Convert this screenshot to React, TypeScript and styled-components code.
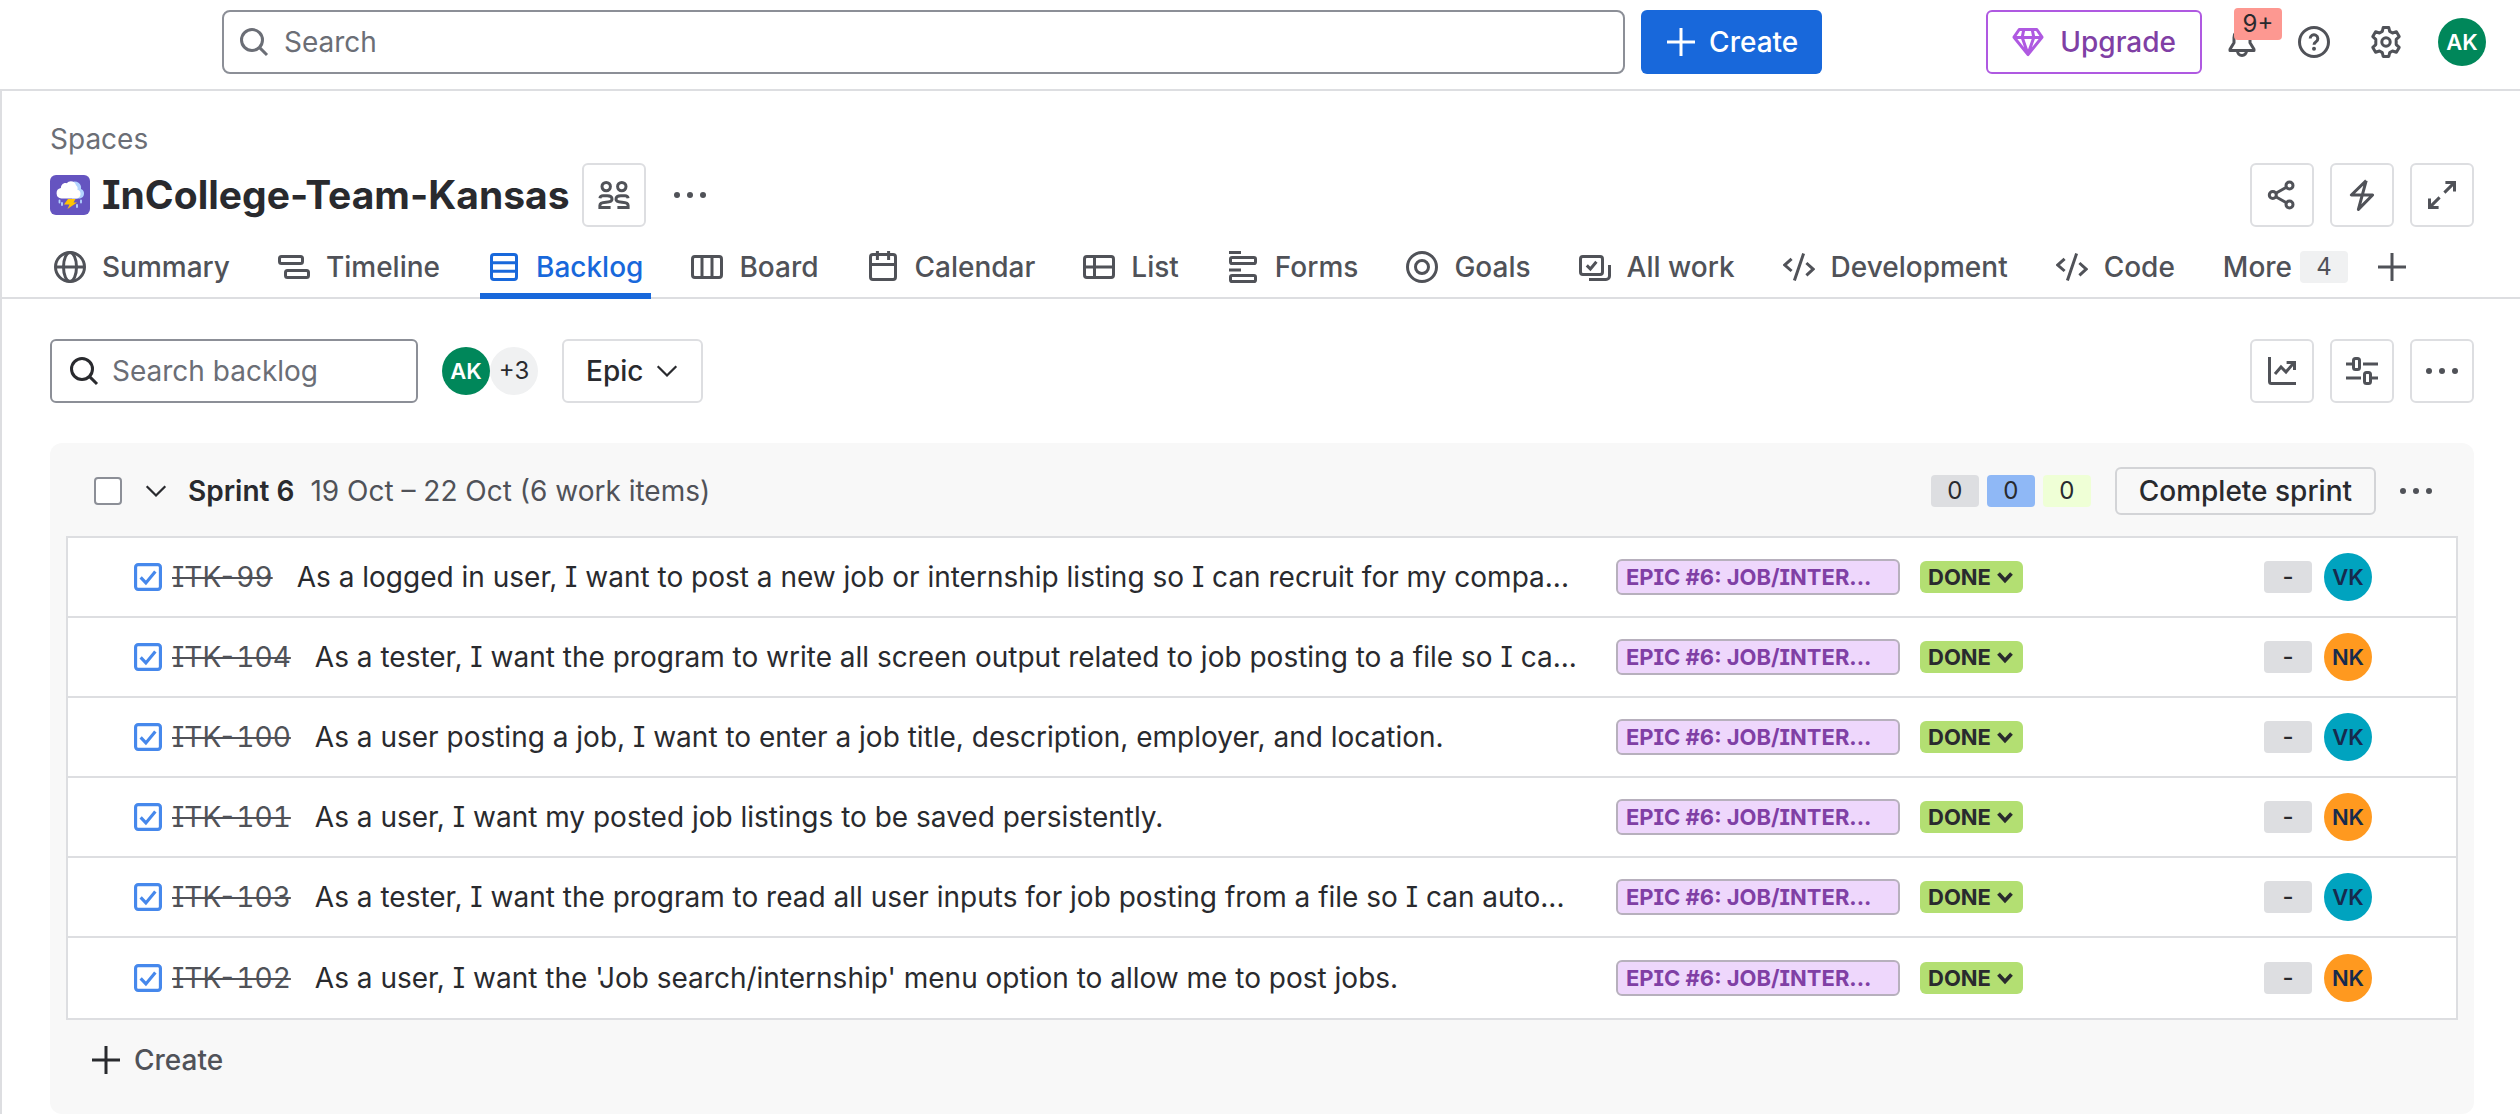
import React from 'react';
import styled, { createGlobalStyle, css } from 'styled-components';

const color = {
  text: '#292a2e',
  subtle: '#505258',
  subtlest: '#6b6e76',
  border: '#dddee1',
  inputBorder: '#8c8f97',
  blue: '#1868db',
  neutral: '#dddee1',
};

const GlobalStyle = createGlobalStyle`
  *, *::before, *::after { box-sizing: border-box; }
  body {
    margin: 0;
    background: #fff;
    color: ${color.text};
    font-family: Inter, "Liberation Sans", sans-serif;
    font-size: 28px;
    line-height: 40px;
    font-feature-settings: 'cv08';
  }
  button, input { font: inherit; font-feature-settings: inherit; color: inherit; margin: 0; }
  button { cursor: pointer; background: none; border: 0; padding: 0; }
  h1, h2, p, ul { margin: 0; padding: 0; }
  a { color: inherit; text-decoration: none; }
`;

/* ---------- icons ---------- */

const Svg = styled.svg<{ $size?: number }>`
  display: block;
  flex: none;
  width: ${(p) => p.$size ?? 32}px;
  height: ${(p) => p.$size ?? 32}px;
  fill: none;
  stroke: currentColor;
  stroke-width: 1.5;
`;

type IconProps = { children: React.ReactNode; size?: number };
const Icon = ({ children, size }: IconProps) => (
  <Svg viewBox="0 0 16 16" $size={size} aria-hidden="true">
    {children}
  </Svg>
);

const SearchIcon = () => (
  <Icon>
    <circle cx="7" cy="7" r="5.25" />
    <path d="M10.8 10.8 14.5 14.5" />
  </Icon>
);
const PlusIcon = () => (
  <Icon>
    <path d="M8 1v14M1 8h14" />
  </Icon>
);
const GemIcon = () => (
  <Icon>
    <path d="M3.6 1.75h8.8L15 5.6 8 14.3 1 5.6zM1 5.7h14M5.9 1.75 5.1 5.7 8 14l2.9-8.3-.8-3.95" strokeLinejoin="round" />
  </Icon>
);
const BellIcon = () => (
  <Icon>
    <path d="M8 1.75a4 4 0 0 0-4 4v2.6L2 11.6v.65h12v-.65l-2-3.25v-2.6a4 4 0 0 0-4-4Z" strokeLinejoin="round" />
    <path d="M5.75 12.5a2.25 2.25 0 0 0 4.5 0" />
  </Icon>
);
const HelpIcon = () => (
  <Icon>
    <circle cx="8" cy="8" r="7.25" />
    <path d="M6.1 6.3a1.9 1.9 0 1 1 2.9 1.6c-.6.4-1 .7-1 1.5" />
    <circle cx="8" cy="11.4" r="1" fill="currentColor" stroke="none" />
  </Icon>
);
const GearIcon = () => (
  <Icon>
    <path
      d="M6.6 .75h2.8l.45 1.95 1.4.8 1.95-.6 1.4 2.4-1.5 1.4v2.6l1.5 1.4-1.4 2.4-1.95-.6-1.4.8-.45 1.95H6.6l-.45-1.95-1.4-.8-1.95.6-1.4-2.4 1.5-1.4V6.7L1.4 5.3l1.4-2.4 1.95.6 1.4-.8z"
      strokeLinejoin="round"
    />
    <circle cx="8" cy="8" r="2.1" />
  </Icon>
);
const PersonHalf = () => (
  <>
    <circle cx="4.1" cy="3.8" r="2.1" />
    <path d="M.95 9.6C1.1 8.8 1.700 8.400 2.500 8.400H4.600C6.100 8.400 7 9.100 7 10.100C7 11.400 5.600 11.500 4 11.600C2 11.700 .95 12.100 .95 13.200V14.250H6.300" />
  </>
);
const PeopleIcon = () => (
  <Icon>
    <PersonHalf />
    <g transform="matrix(-1 0 0 1 16 0)">
      <PersonHalf />
    </g>
  </Icon>
);
const DotsIcon = () => (
  <Icon>
    <g fill="currentColor" stroke="none">
      <circle cx="1.5" cy="8" r="1.5" />
      <circle cx="8" cy="8" r="1.5" />
      <circle cx="14.5" cy="8" r="1.5" />
    </g>
  </Icon>
);
const ShareIcon = () => (
  <Icon>
    <circle cx="3.4" cy="8" r="1.75" />
    <circle cx="11.75" cy="3.25" r="1.75" />
    <circle cx="11.75" cy="12.75" r="1.75" />
    <path d="M4.9 7.1l5.3-3M4.9 8.9l5.3 3" />
  </Icon>
);
const BoltIcon = () => (
  <Icon>
    <path d="M10.1 .8 2.7 8h10.6L6.2 15.2 10.1 .8" strokeLinejoin="round" />
  </Icon>
);
const ExpandIcon = () => (
  <Icon>
    <path d="M9.2 6.8l5-5M9.7 1.75h4.55V6.3M6.8 9.2l-5 5M6.3 14.25H1.75V9.7" />
  </Icon>
);
const GlobeIcon = () => (
  <Icon>
    <circle cx="8" cy="8" r="7.25" />
    <ellipse cx="8" cy="8" rx="3.25" ry="7.25" />
    <path d="M.75 8h14.5" />
  </Icon>
);
const TimelineIcon = () => (
  <Icon>
    <rect x=".75" y="2.75" width="11.5" height="3.5" rx="1" />
    <rect x="3.75" y="9.75" width="11.5" height="3.5" rx="1" />
  </Icon>
);
const BacklogIcon = () => (
  <Icon>
    <rect x="1.75" y="1.75" width="12.5" height="12.5" rx="1.2" />
    <path d="M2 5.9h12M2 10.1h12" />
  </Icon>
);
const BoardIcon = () => (
  <Icon>
    <rect x=".75" y="2.75" width="14.5" height="10.5" rx="1.2" />
    <path d="M5.5 3v10M10.5 3v10" />
  </Icon>
);
const CalendarIcon = () => (
  <Icon>
    <rect x="1.75" y="1.75" width="12.5" height="12.5" rx="1.2" />
    <path d="M2 6.75h12M5.2 0v4.5M10.8 0v4.5" />
  </Icon>
);
const ListIcon = () => (
  <Icon>
    <rect x=".75" y="2.75" width="14.5" height="10.5" rx="1.2" />
    <path d="M1 8h14M5.75 3v10" />
  </Icon>
);
const FormsIcon = () => (
  <Icon>
    <path d="M1 .75h6M1 9.5h6" />
    <rect x="1.75" y="3.25" width="12.5" height="3" rx=".8" />
    <rect x="1.75" y="12.25" width="12.5" height="3" rx=".8" />
  </Icon>
);
const GoalsIcon = () => (
  <Icon>
    <circle cx="8" cy="8" r="7.25" />
    <circle cx="8" cy="8" r="3.25" />
  </Icon>
);
const AllWorkIcon = () => (
  <Icon>
    <rect x=".75" y="2.75" width="11" height="9" rx="1.2" />
    <path d="M3.9 7.2l1.8 1.8 3-3.6M15.25 7v5.5a1.75 1.75 0 0 1-1.75 1.75H5" />
  </Icon>
);
const CodeIcon = () => (
  <Icon>
    <path d="M4.3 3.9.9 7l3.4 3M10.3 1.3 5.7 14.7M11.7 6l3.4 3.1-3.4 3.1" />
  </Icon>
);
const ChevronIcon = () => (
  <Icon size={24}>
    <path d="M1.8 4.8 8 11l6.2-6.2" />
  </Icon>
);
const ChartIcon = () => (
  <Icon>
    <path d="M1.75 1v12.25a1 1 0 0 0 1 1H15M4.5 9.5l3-3.5 2.5 2.5 4-4.7M10.3 3.75h3.95V7.5" />
  </Icon>
);
const SlidersIcon = () => (
  <Icon>
    <path d="M0 4.5h3M8.5 4.5H16M0 11.5h7.5M13 11.5h3" />
    <rect x="3.75" y="1.75" width="3" height="5.5" rx="1" />
    <rect x="9.25" y="8.75" width="3" height="5.5" rx="1" />
  </Icon>
);
const TaskIcon = () => (
  <Icon size={28}>
    <g stroke="#4688ec" strokeWidth="1.8">
      <rect x=".9" y=".9" width="14.2" height="14.2" rx="1.5" />
      <path d="M3.8 8.2l3 3.2 5.4-6.6" />
    </g>
  </Icon>
);
const StatusChevronIcon = () => (
  <Icon size={20}>
    <path d="M2.8 5.2 8 10.8l5.2-5.6" strokeWidth="3" />
  </Icon>
);
const ThunderIcon = () => (
  <Svg viewBox="0 0 40 40" $size={40} aria-hidden="true">
    <rect width="40" height="40" rx="6" fill="#6554c0" stroke="none" />
    <path d="M22 7a6.5 6.5 0 0 1 9 7 5 5 0 0 1-1 9.5h-8z" fill="#b3d4ff" stroke="none" />
    <path
      d="M11.5 23.5a5.3 5.3 0 0 1-.6-10.5C10.8 9.5 14 7 16.8 8.2 19 5 25 5.5 26 10.2c1.5 1 2 3 1.4 4.6 2.6.4 3.6 3.2 3 5.2-.5 2-2 3.5-4 3.5z"
      fill="#fff"
      stroke="none"
    />
    <path d="M18 24h7.5l-2 3.5h3.5L17.5 34l2-4.5H14z" fill="#ffc400" stroke="none" />
    <path d="M9.5 25.5v2M12 28v2M27 30v2M31 25.5v2" stroke="#b3d4ff" strokeWidth="1.8" strokeLinecap="round" />
  </Svg>
);

/* ---------- shared controls ---------- */

const IconButton = styled.button<{ $bordered?: boolean }>`
  display: flex;
  align-items: center;
  justify-content: center;
  flex: none;
  width: 64px;
  height: 64px;
  border-radius: 6px;
  color: ${color.subtle};
  ${(p) => p.$bordered && css`border: 2px solid ${color.border};`}
`;

const Avatar = styled.span<{ $bg: string; $fg?: string }>`
  display: flex;
  align-items: center;
  justify-content: center;
  flex: none;
  width: 48px;
  height: 48px;
  border-radius: 50%;
  background: ${(p) => p.$bg};
  color: ${(p) => p.$fg ?? '#fff'};
  font-size: 22px;
  font-weight: 600;
`;

const SearchField = styled.label`
  display: flex;
  align-items: center;
  gap: 12px;
  height: 64px;
  padding: 0 16px;
  border: 2px solid ${color.inputBorder};
  border-radius: 6px;
  background: #fff;
`;

const SearchInput = styled.input`
  flex: 1;
  min-width: 0;
  height: 40px;
  padding: 0;
  border: 0;
  outline: 0;
  background: none;
  &::placeholder { color: ${color.subtlest}; opacity: 1; }
`;

const ButtonGroup = styled.div`
  display: flex;
  align-items: center;
  gap: 16px;
  margin-left: auto;
`;

/* ---------- top bar ---------- */

const TopBar = styled.header`
  display: flex;
  align-items: flex-start;
  height: 91px;
  padding: 10px 34px 0 222px;
  border-bottom: 2px solid ${color.border};
`;

const GlobalSearch = styled(SearchField)`
  flex: 1;
  gap: 14px;
  min-width: 0;
  margin-right: 16px;
  padding: 0 14px;
  border-radius: 8px;
  color: ${color.subtlest};
`;

const CreateButton = styled.button`
  display: flex;
  align-items: center;
  gap: 12px;
  height: 64px;
  padding: 0 24px;
  border-radius: 6px;
  background: ${color.blue};
  color: #fff;
  font-weight: 500;
`;

const Account = styled.div`
  display: flex;
  align-items: center;
  height: 64px;
  margin-left: 164px;
`;

const UpgradeButton = styled.button`
  display: flex;
  align-items: center;
  gap: 16px;
  height: 64px;
  margin-right: 8px;
  padding: 0 24px;
  border: 2px solid #af59e1;
  border-radius: 6px;
  color: #803fa5;
  font-weight: 500;
  svg { color: #af59e1; }
`;

const HeaderIcons = styled.div`
  display: flex;
  gap: 8px;
  margin-right: 20px;
`;

const BellButton = styled(IconButton)`
  position: relative;
`;

const Counter = styled.span`
  position: absolute;
  top: -2px;
  left: 24px;
  width: 48px;
  height: 32px;
  border-radius: 4px;
  background: #fd9891;
  color: ${color.text};
  font-size: 24px;
  line-height: 32px;
  text-align: center;
`;

/* ---------- space header ---------- */

const Page = styled.main`
  border-left: 2px solid ${color.border};
`;

const SpaceHeader = styled.section`
  padding: 28px 46px 0 48px;
`;

const Crumb = styled.a`
  display: block;
  width: max-content;
  margin-bottom: 4px;
  color: ${color.subtlest};
`;

const TitleRow = styled.div`
  display: flex;
  align-items: center;
  gap: 12px;
`;

const Title = styled.h1`
  font-size: 39px;
  line-height: 48px;
  font-weight: 700;
  white-space: nowrap;
`;

const Tabs = styled.nav`
  display: flex;
  align-items: stretch;
  gap: 32px;
  height: 72px;
  padding: 0 44px;
  border-bottom: 2px solid ${color.border};
`;

const tabLook = css`
  position: relative;
  display: flex;
  align-items: center;
  gap: 16px;
  padding: 10px 8px 0;
  color: ${color.subtle};
  font-weight: 500;
  white-space: nowrap;
`;

const Tab = styled.a`
  ${tabLook}
  &[aria-current='page'] { color: ${color.blue}; }
  &[aria-current='page']::after {
    content: '';
    position: absolute;
    inset: auto 0 -2px;
    height: 6px;
    background: ${color.blue};
  }
`;

const MoreTab = styled.button`
  ${tabLook}
  gap: 8px;
`;

const AddTab = styled.button`
  ${tabLook}
  margin-left: -20px;
`;

const Pill = styled.span<{ $bg: string; $fg?: string }>`
  flex: none;
  width: 48px;
  height: 32px;
  border-radius: 4px;
  background: ${(p) => p.$bg};
  color: ${(p) => p.$fg ?? color.text};
  font-size: 24px;
  font-weight: 400;
  line-height: 32px;
  text-align: center;
`;

/* ---------- backlog ---------- */

const Toolbar = styled.div`
  display: flex;
  align-items: center;
  padding: 40px 46px 40px 48px;
`;

const BacklogSearch = styled(SearchField)`
  width: 368px;
`;

const Members = styled.div`
  display: flex;
  margin: 0 24px;
`;

const MoreMembers = styled.button`
  width: 48px;
  height: 48px;
  border-radius: 50%;
  background: #f0f1f2;
  font-size: 24px;
`;

const EpicFilter = styled.button`
  display: flex;
  align-items: center;
  gap: 12px;
  height: 64px;
  padding: 0 22px;
  border: 2px solid ${color.border};
  border-radius: 6px;
  font-weight: 500;
`;

const Sprint = styled.section`
  margin: 0 46px 0 48px;
  padding: 24px 16px 14px;
  border-radius: 12px;
  background: #f8f8f8;
`;

const SprintHead = styled.header`
  display: flex;
  align-items: center;
  height: 48px;
  margin-bottom: 21px;
  padding: 0 10px 0 28px;
`;

const Checkbox = styled.input`
  appearance: none;
  flex: none;
  width: 28px;
  height: 28px;
  border: 2px solid ${color.inputBorder};
  border-radius: 4px;
  background: #fff;
`;

const Toggle = styled.button`
  display: flex;
  align-items: center;
  margin: 0 20px 0 22px;
`;

const SprintName = styled.h2`
  font-size: 28px;
  line-height: 40px;
  font-weight: 600;
`;

const SprintDates = styled.span`
  margin-left: 16px;
  color: ${color.subtle};
`;

const SprintActions = styled.div`
  display: flex;
  align-items: center;
  gap: 8px;
  margin-left: auto;
`;

const CompleteButton = styled.button`
  height: 48px;
  margin-left: 16px;
  padding: 0 22px;
  border: 2px solid #d3d4d7;
  border-radius: 6px;
  font-weight: 500;
`;

const Issues = styled.ul`
  border: 2px solid ${color.border};
  background: #fff;
  list-style: none;
`;

const Issue = styled.li`
  display: flex;
  align-items: center;
  height: 80px;
  padding: 0 84px 0 66px;
  border-bottom: 2px solid ${color.border};
  &:last-child { border-bottom: 0; }
`;

const IssueKey = styled.a`
  margin: 0 24px 0 10px;
  color: ${color.subtle};
  font-feature-settings: 'cv08', 'tnum';
  text-decoration: line-through;
  white-space: nowrap;
`;

const Summary = styled.p`
  flex: 1;
  min-width: 0;
  overflow: hidden;
  text-overflow: ellipsis;
  white-space: nowrap;
`;

const EpicTag = styled.button`
  flex: none;
  width: 284px;
  height: 36px;
  margin: 0 20px 0 36px;
  padding: 0 8px;
  overflow: hidden;
  border: 2px solid #b7b0bd;
  border-radius: 6px;
  background: #eed7fc;
  color: #803fa5;
  font-size: 22px;
  font-weight: 700;
  line-height: 32px;
  text-align: left;
  text-overflow: ellipsis;
  white-space: nowrap;
`;

const StatusCell = styled.div`
  flex: none;
  width: 344px;
`;

const Status = styled.button`
  display: flex;
  align-items: center;
  gap: 4px;
  height: 32px;
  padding: 0 8px;
  border-radius: 6px;
  background: #b3df72;
  font-size: 22px;
  font-weight: 700;
  line-height: 32px;
`;

const Points = styled(Pill)`
  margin-right: 12px;
  font-weight: 500;
`;

const AddIssue = styled.button`
  display: flex;
  align-items: center;
  gap: 12px;
  height: 80px;
  padding: 0 24px;
  color: ${color.subtle};
  font-weight: 500;
  svg { color: ${color.text}; }
`;

/* ---------- data ---------- */

const tabs = [
  { name: 'Summary', icon: <GlobeIcon /> },
  { name: 'Timeline', icon: <TimelineIcon /> },
  { name: 'Backlog', icon: <BacklogIcon />, current: true },
  { name: 'Board', icon: <BoardIcon /> },
  { name: 'Calendar', icon: <CalendarIcon /> },
  { name: 'List', icon: <ListIcon /> },
  { name: 'Forms', icon: <FormsIcon /> },
  { name: 'Goals', icon: <GoalsIcon /> },
  { name: 'All work', icon: <AllWorkIcon /> },
  { name: 'Development', icon: <CodeIcon /> },
  { name: 'Code', icon: <CodeIcon /> },
];

const people: Record<string, string> = { VK: '#00a3bf', NK: '#ff991f' };

const issues = [
  { key: 'ITK-99', who: 'VK', summary: 'As a logged in user, I want to post a new job or internship listing so I can recruit for my compa...' },
  { key: 'ITK-104', who: 'NK', summary: 'As a tester, I want the program to write all screen output related to job posting to a file so I ca...' },
  { key: 'ITK-100', who: 'VK', summary: 'As a user posting a job, I want to enter a job title, description, employer, and location.' },
  { key: 'ITK-101', who: 'NK', summary: 'As a user, I want my posted job listings to be saved persistently.' },
  { key: 'ITK-103', who: 'VK', summary: 'As a tester, I want the program to read all user inputs for job posting from a file so I can auto...' },
  { key: 'ITK-102', who: 'NK', summary: "As a user, I want the 'Job search/internship' menu option to allow me to post jobs." },
];

export default function App() {
  return (
    <>
      <GlobalStyle />
      <TopBar>
        <GlobalSearch>
          <SearchIcon />
          <SearchInput type="search" placeholder="Search" aria-label="Search" />
        </GlobalSearch>
        <CreateButton>
          <PlusIcon />
          Create
        </CreateButton>
        <Account>
          <UpgradeButton>
            <GemIcon />
            Upgrade
          </UpgradeButton>
          <HeaderIcons>
            <BellButton aria-label="Notifications">
              <BellIcon />
              <Counter>9+</Counter>
            </BellButton>
            <IconButton aria-label="Help"><HelpIcon /></IconButton>
            <IconButton aria-label="Settings"><GearIcon /></IconButton>
          </HeaderIcons>
          <Avatar $bg="#00875a">AK</Avatar>
        </Account>
      </TopBar>

      <Page>
        <SpaceHeader>
          <Crumb href="#spaces">Spaces</Crumb>
          <TitleRow>
            <ThunderIcon />
            <Title>InCollege-Team-Kansas</Title>
            <IconButton $bordered aria-label="Team"><PeopleIcon /></IconButton>
            <IconButton aria-label="More actions"><DotsIcon /></IconButton>
            <ButtonGroup>
              <IconButton $bordered aria-label="Share"><ShareIcon /></IconButton>
              <IconButton $bordered aria-label="Automation"><BoltIcon /></IconButton>
              <IconButton $bordered aria-label="Full screen"><ExpandIcon /></IconButton>
            </ButtonGroup>
          </TitleRow>
        </SpaceHeader>

        <Tabs aria-label="Space">
          {tabs.map((t) => (
            <Tab key={t.name} href={`#${t.name}`} aria-current={t.current ? 'page' : undefined}>
              {t.icon}
              {t.name}
            </Tab>
          ))}
          <MoreTab>
            More
            <Pill $bg="#f0f1f2" $fg={color.subtle}>4</Pill>
          </MoreTab>
          <AddTab aria-label="Add view"><PlusIcon /></AddTab>
        </Tabs>

        <Toolbar>
          <BacklogSearch>
            <SearchIcon />
            <SearchInput type="search" placeholder="Search backlog" aria-label="Search backlog" />
          </BacklogSearch>
          <Members>
            <Avatar $bg="#00875a">AK</Avatar>
            <MoreMembers>+3</MoreMembers>
          </Members>
          <EpicFilter>
            Epic
            <ChevronIcon />
          </EpicFilter>
          <ButtonGroup>
            <IconButton $bordered aria-label="Insights"><ChartIcon /></IconButton>
            <IconButton $bordered aria-label="View settings"><SlidersIcon /></IconButton>
            <IconButton $bordered aria-label="More"><DotsIcon /></IconButton>
          </ButtonGroup>
        </Toolbar>

        <Sprint>
          <SprintHead>
            <Checkbox type="checkbox" aria-label="Select all work items" />
            <Toggle aria-label="Collapse sprint"><ChevronIcon /></Toggle>
            <SprintName>Sprint 6</SprintName>
            <SprintDates>19 Oct – 22 Oct (6 work items)</SprintDates>
            <SprintActions>
              <Pill $bg={color.neutral}>0</Pill>
              <Pill $bg="#8fb8f6">0</Pill>
              <Pill $bg="#efffd6">0</Pill>
              <CompleteButton>Complete sprint</CompleteButton>
              <IconButton aria-label="Sprint actions"><DotsIcon /></IconButton>
            </SprintActions>
          </SprintHead>
          <Issues>
            {issues.map((issue) => (
              <Issue key={issue.key}>
                <TaskIcon />
                <IssueKey href={`#${issue.key}`}>{issue.key}</IssueKey>
                <Summary>{issue.summary}</Summary>
                <EpicTag>EPIC #6: JOB/INTER...</EpicTag>
                <StatusCell>
                  <Status>
                    DONE
                    <StatusChevronIcon />
                  </Status>
                </StatusCell>
                <Points $bg={color.neutral}>-</Points>
                <Avatar $bg={people[issue.who]} $fg="#172b4d">{issue.who}</Avatar>
              </Issue>
            ))}
          </Issues>
          <AddIssue>
            <PlusIcon />
            Create
          </AddIssue>
        </Sprint>
      </Page>
    </>
  );
}
